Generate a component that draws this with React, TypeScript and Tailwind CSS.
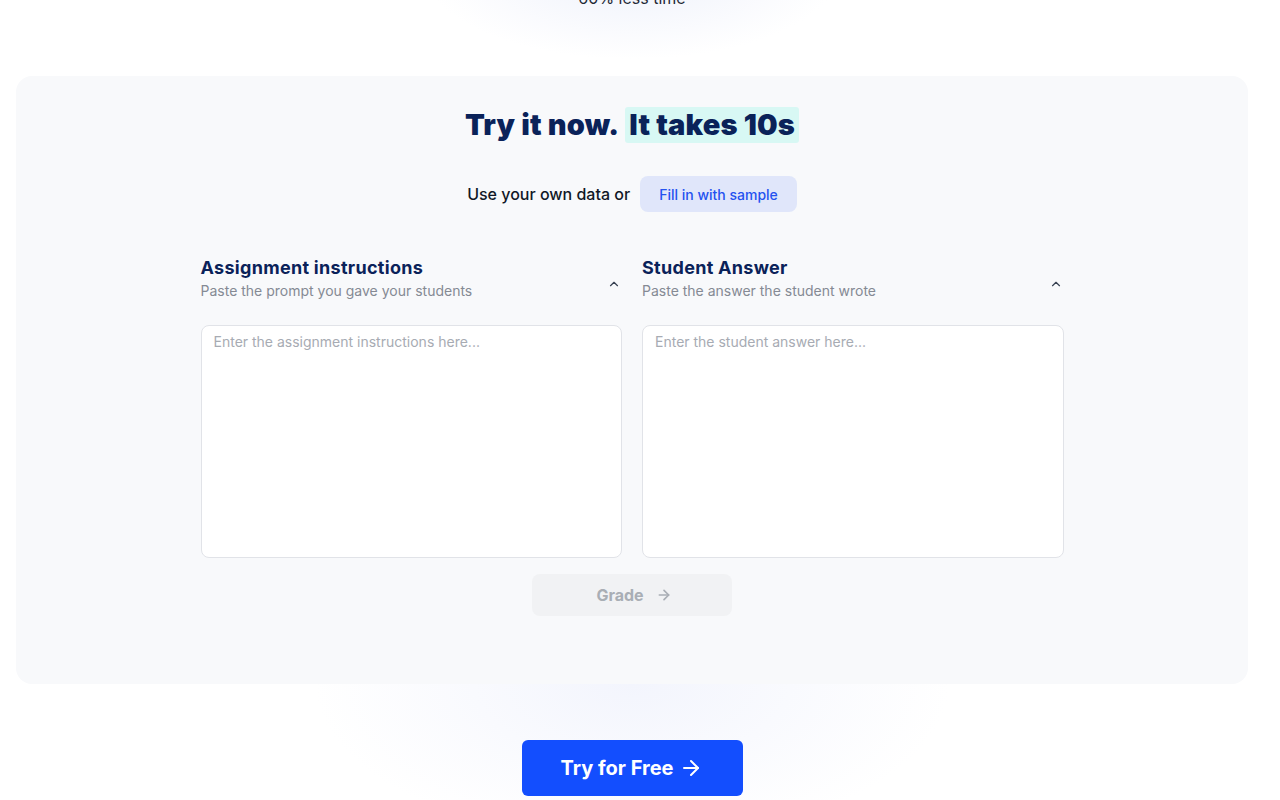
import { ArrowRight, ChevronUp } from "lucide-react";

const Field = ({
  title,
  hint,
  placeholder,
}: {
  title: string;
  hint: string;
  placeholder: string;
}) => (
  <div className="flex flex-col">
    <div className="flex items-end justify-between">
      <div className="flex flex-col">
        <h3 className="text-[18px] font-bold leading-[22px] tracking-[0.3px] text-[#0a2259]">{title}</h3>
        <p className="mt-[2px] text-[14px] leading-[20px] text-[#858a94]">{hint}</p>
      </div>
      <ChevronUp className="mb-[10px] mr-[1px] h-[14px] w-[14px] text-[#374151]" strokeWidth={2} />
    </div>
    <textarea
      placeholder={placeholder}
      className="mt-[24px] h-[233px] w-full resize-none rounded-lg border border-[#e1e3e8] bg-white px-[12px] py-[6px] text-[14px] leading-[20px] text-[#111827] outline-none placeholder:text-[#a7abb3]"
    />
  </div>
);

export default function App() {
  return (
    <div className="min-h-[800px] w-[1264px] overflow-hidden bg-white font-['Inter',sans-serif]">
      {/* Top leftover of the previous section */}
      <div className="relative flex h-[76px] justify-center overflow-hidden">
        <div className="pointer-events-none absolute left-1/2 top-[-120px] h-[180px] w-[420px] -translate-x-1/2 rounded-full bg-[radial-gradient(ellipse_at_center,#eef1fb_0%,#ffffff_70%)]" />
        <p className="relative mt-[-12px] text-[16px] leading-[20px] text-[#1f2937]">60% less time</p>
      </div>

      {/* Demo card */}
      <div className="px-[16px]">
        <section className="flex flex-col items-center rounded-2xl bg-[#f8f9fb] pb-[68px] pt-[31px]">
          <h2 className="flex items-center gap-[6px] text-[29px] font-black leading-[36px] tracking-[0.2px] text-[#0a2259]">
            <span>Try it now.</span>
            <span className="rounded-[3px] bg-[#d8f8f4] px-[4px]">It takes 10s</span>
          </h2>

          <div className="mt-[33px] flex items-center gap-[10px]">
            <span className="text-[16px] font-medium text-[#111827]">Use your own data or</span>
            <button className="h-[36px] rounded-lg bg-[#e0e6fa] px-[19px] text-[14px] font-medium text-[#2452f0]">
              Fill in with sample
            </button>
          </div>

          <div className="mt-[45px] grid w-[863px] grid-cols-2 gap-[20px]">
            <Field
              title="Assignment instructions"
              hint="Paste the prompt you gave your students"
              placeholder="Enter the assignment instructions here..."
            />
            <Field
              title="Student Answer"
              hint="Paste the answer the student wrote"
              placeholder="Enter the student answer here..."
            />
          </div>

          <button className="mt-[16px] flex h-[42px] w-[200px] items-center justify-center gap-[12px] rounded-lg bg-[#f1f2f4] pl-[4px] text-[16px] font-bold text-[#a9aeb5]">
            Grade
            <ArrowRight className="h-[16px] w-[16px]" strokeWidth={2.5} />
          </button>
        </section>
      </div>

      {/* CTA */}
      <div className="relative flex justify-center pt-[56px]">
        <div className="pointer-events-none absolute left-1/2 top-0 h-[160px] w-[640px] -translate-x-1/2 bg-[radial-gradient(ellipse_at_top,#f3f5fd_0%,#ffffff_70%)]" />
        <button className="relative flex h-[56px] w-[221px] items-center justify-center gap-[6px] rounded-md bg-[#134efe] text-[20px] font-bold text-white">
          Try for Free
          <ArrowRight className="h-[24px] w-[24px]" strokeWidth={2} />
        </button>
      </div>
    </div>
  );
}
